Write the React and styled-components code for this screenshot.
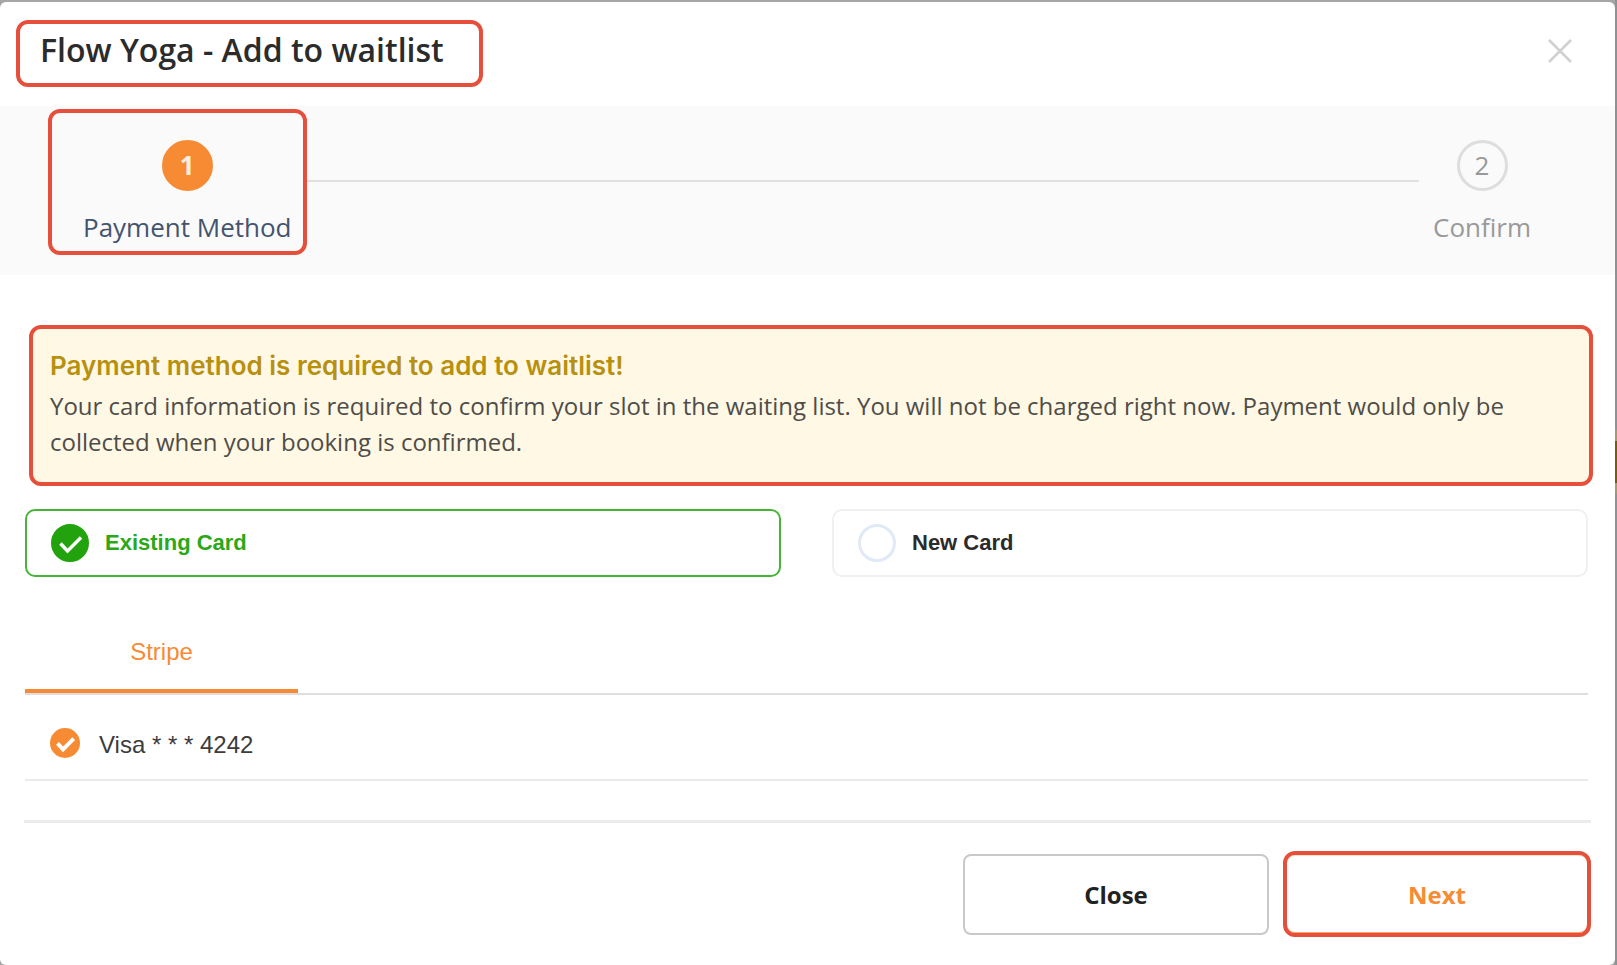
import React, { useState } from "react";
import styled, { createGlobalStyle } from "styled-components";

const GlobalStyle = createGlobalStyle`
  * {
    box-sizing: border-box;
  }
  body {
    margin: 0;
    background-color: #a6a6a6;
    background-image: linear-gradient(#8f9193 0 430px, #a69a6c 430px 441px, #7a5c08 441px 483px, #a69a6c 483px 494px, #8f9193 494px);
    background-size: 2px 100%;
    background-position: right top;
    background-repeat: no-repeat;
    font-family: "Open Sans", sans-serif;
    color: #2b2b2b;
  }
  h1, h2, p, ol {
    margin: 0;
    padding: 0;
  }
`;

const steps = [
  { id: 1, label: "Payment Method" },
  { id: 2, label: "Confirm" },
];

const cardOptions = [
  { value: "existing", label: "Existing Card" },
  { value: "new", label: "New Card" },
];

const savedCards = [{ id: "visa-4242", label: "Visa * * * 4242" }];

const Check = ({ width = 3.4 }) => (
  <svg viewBox="0 0 38 38" fill="none" aria-hidden="true">
    <path d="M9.5 19.5 L16.5 27 L30 13.5" stroke="#fff" strokeWidth={width} />
  </svg>
);

const App = () => {
  const [cardType, setCardType] = useState("existing");
  const [savedCard, setSavedCard] = useState("visa-4242");
  const current = 1;

  return (
    <>
      <GlobalStyle />
      <Modal role="dialog" aria-labelledby="modal-title">
        <Header>
          <Title id="modal-title">Flow Yoga - Add to waitlist</Title>
          <CloseIcon type="button" aria-label="Close dialog">
            <svg viewBox="0 0 24 24" fill="none" stroke="#d0d0d0" strokeWidth="2.6">
              <path d="M1 1 L23 23 M23 1 L1 23" />
            </svg>
          </CloseIcon>
        </Header>

        <Steps>
          {steps.map((step) => (
            <Step key={step.id} $active={step.id === current}>
              <StepNumber $active={step.id === current}>{step.id}</StepNumber>
              {step.label}
            </Step>
          ))}
        </Steps>

        <Content>
          <Notice>
            <h2>Payment method is required to add to waitlist!</h2>
            <p>
              Your card information is required to confirm your slot in the
              waiting list. You will not be charged right now. Payment would
              only be collected when your booking is confirmed.
            </p>
          </Notice>

          <Options role="radiogroup" aria-label="Card">
            {cardOptions.map(({ value, label }) => (
              <Option key={value} $checked={cardType === value}>
                <Mark $size={38} $color="#22a30d">
                  <input
                    type="radio"
                    name="cardType"
                    checked={cardType === value}
                    onChange={() => setCardType(value)}
                  />
                  {cardType === value && <Check />}
                </Mark>
                {label}
              </Option>
            ))}
          </Options>

          <Tabs role="tablist">
            <Tab type="button" role="tab" aria-selected="true">
              Stripe
            </Tab>
          </Tabs>

          {savedCards.map(({ id, label }) => (
            <SavedCard key={id}>
              <Mark $size={30} $color="#f68b33">
                <input
                  type="radio"
                  name="savedCard"
                  checked={savedCard === id}
                  onChange={() => setSavedCard(id)}
                />
                {savedCard === id && <Check width={5} />}
              </Mark>
              {label}
            </SavedCard>
          ))}
        </Content>

        <Footer>
          <Button type="button">Close</Button>
          <Button type="button" $primary>
            Next
          </Button>
        </Footer>
      </Modal>
    </>
  );
};

const Modal = styled.main`
  min-height: calc(100vh - 2px);
  margin: 2px 2px 0 0;
  background-color: #fff;
  border-radius: 6px;
`;

const Header = styled.header`
  display: flex;
  align-items: flex-start;
  justify-content: space-between;
  padding: 18px 40px 19px 16px;
`;

const Title = styled.h1`
  padding: 6px 35px 13px 20px;
  border: 4px solid #e54f3b;
  border-radius: 12px;
  font-size: 32px;
  font-weight: 600;
  line-height: 40px;
`;

const CloseIcon = styled.button`
  width: 30px;
  height: 30px;
  margin-top: 16px;
  padding: 3px;
  border: 0;
  background: none;
  cursor: pointer;

  svg {
    display: block;
  }
`;

const Steps = styled.ol`
  display: flex;
  justify-content: space-between;
  padding: 3px 84px 20px 48px;
  background-color: #fafafa;
  list-style: none;

  /* line between the two steps */
  &::before {
    content: "";
    order: 1;
    flex: 1;
    height: 2px;
    margin: 71px 14px 0 0;
    background-color: #e0e0e0;
  }
  li:last-child {
    order: 2;
  }
`;

const Step = styled.li`
  display: flex;
  flex-direction: column;
  align-items: center;
  gap: 18px;
  padding: ${({ $active }) => ($active ? "27px 11px 6px 31px" : "31px 0 10px")};
  border: ${({ $active }) => ($active ? "4px solid #e54f3b" : "0")};
  border-radius: 12px;
  color: ${({ $active }) => ($active ? "#44546f" : "#999999")};
  font-size: 26px;
  font-weight: ${({ $active }) => ($active ? 500 : 400)};
  line-height: 36px;
`;

const StepNumber = styled.span`
  width: 51px;
  height: 51px;
  border: 3px solid ${({ $active }) => ($active ? "#f68b33" : "#dddddd")};
  border-radius: 50%;
  background-color: ${({ $active }) => ($active ? "#f68b33" : "transparent")};
  color: ${({ $active }) => ($active ? "#fdeee0" : "#999999")};
  font-weight: ${({ $active }) => ($active ? 700 : 400)};
  line-height: 45px;
  text-align: center;
`;

const Content = styled.div`
  padding: 50px 27px 39px 25px;
`;

const Notice = styled.section`
  margin: 0 -5px 23px 4px;
  padding: 18px 18px 22px 17px;
  border: 4px solid #e54f3b;
  border-radius: 12px;
  background-color: #fff8e5;

  h2 {
    margin-bottom: 3px;
    color: #b8900f;
    font-family: Inter, sans-serif;
    font-size: 26px;
    font-weight: 600;
    line-height: 38px;
  }
  p {
    color: #4f4d48;
    font-size: 24px;
    line-height: 36px;
  }
`;

const Options = styled.div`
  display: grid;
  grid-template-columns: 1fr 1fr;
  gap: 51px;
  margin-bottom: 53px;
`;

const Option = styled.label`
  display: flex;
  align-items: center;
  gap: 16px;
  height: 68px;
  padding: 0 24px;
  border: 2px solid ${({ $checked }) => ($checked ? "#46b536" : "#f0f0f0")};
  border-radius: 10px;
  color: ${({ $checked }) => ($checked ? "#2aa818" : "#2b2b2b")};
  font-family: "Liberation Sans", sans-serif;
  font-size: 22px;
  font-weight: 700;
  cursor: pointer;
`;

const Mark = styled.span`
  display: grid;
  width: ${({ $size }) => $size}px;
  height: ${({ $size }) => $size}px;

  input,
  svg {
    grid-area: 1 / 1;
    width: 100%;
    height: 100%;
    margin: 0;
  }
  svg {
    pointer-events: none;
  }
  input {
    appearance: none;
    border: 3px solid #dfeaf6;
    border-radius: 50%;
  }
  input:checked {
    border-color: ${({ $color }) => $color};
    background-color: ${({ $color }) => $color};
  }
`;

const Tabs = styled.div`
  display: flex;
  border-bottom: 2px solid #dedede;
`;

const Tab = styled.button`
  width: 273px;
  height: 63px;
  padding: 0 0 15px;
  border: 0;
  border-bottom: 4px solid #f68b33;
  background: none;
  color: #f68b33;
  font-family: "Liberation Sans", sans-serif;
  font-size: 24px;
  cursor: pointer;
`;

const SavedCard = styled.label`
  display: flex;
  align-items: flex-end;
  gap: 19px;
  height: 86px;
  padding: 0 25px 21px;
  border-bottom: 2px solid #ebebeb;
  color: #3c3c3c;
  font-family: "Liberation Sans", sans-serif;
  font-size: 24px;
  line-height: 26px;
  cursor: pointer;
`;

const Footer = styled.footer`
  display: flex;
  justify-content: flex-end;
  align-items: center;
  gap: 14px;
  margin: 0 24px;
  padding: 28px 0;
  border-top: 3px solid #ebebeb;
`;

const Button = styled.button`
  width: ${({ $primary }) => ($primary ? 308 : 306)}px;
  height: ${({ $primary }) => ($primary ? 86 : 81)}px;
  border: ${({ $primary }) => ($primary ? "4px solid #e54f3b" : "2px solid #c9c9c9")};
  border-radius: ${({ $primary }) => ($primary ? 12 : 8)}px;
  background-color: #fff;
  box-shadow: ${({ $primary }) => ($primary ? "inset 0 1px #fde0c8, inset 0 -1px #f6a55f" : "none")};
  color: ${({ $primary }) => ($primary ? "#f68b33" : "#222222")};
  font-family: inherit;
  font-size: 24px;
  font-weight: 700;
  cursor: pointer;
`;

export default App;
